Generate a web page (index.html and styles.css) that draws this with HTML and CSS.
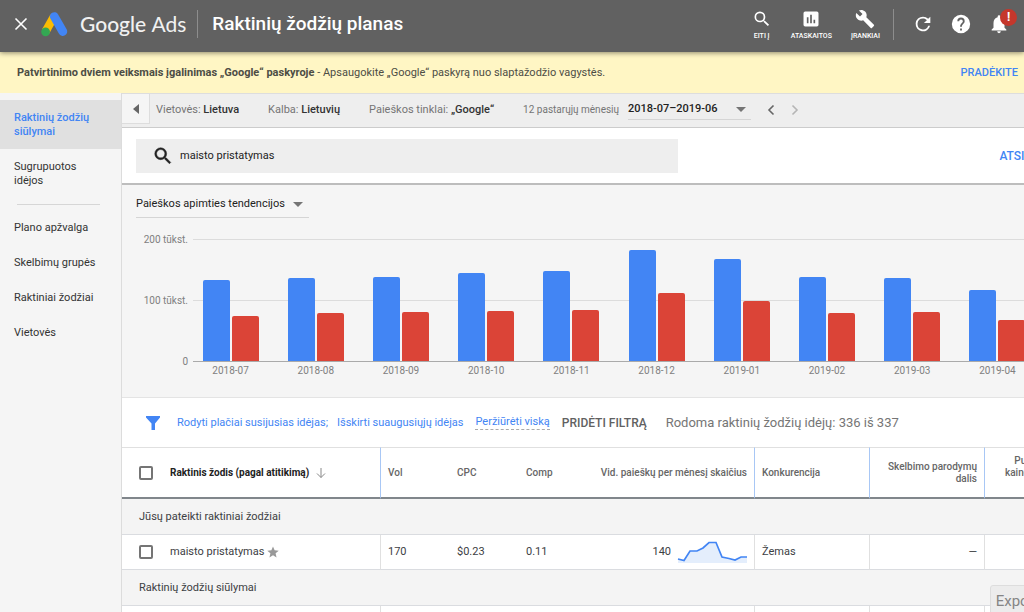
FILE: index.html
```html
<!DOCTYPE html>
<html lang="lt">
<head>
<meta charset="utf-8">
<meta name="viewport" content="width=device-width, initial-scale=1">
<title>Raktinių žodžių planas</title>
<link rel="stylesheet" href="styles.css">
</head>
<body>
<header class="topbar">
  <button class="icon-btn close" aria-label="Uždaryti"><svg width="14" height="14" viewBox="0 0 14 14"><path d="M1.500 1.500l11 11M12.500 1.500l-11 11" stroke="#fff" stroke-width="1.600"/></svg></button>
  <svg class="logo" width="27" height="25" viewBox="0 0 27 25"><path d="M13 4.500L4.600 19.500" stroke="#fbbc04" stroke-width="8.400"/><path d="M13.300 4.600L21.800 19.500" stroke="#4285f4" stroke-width="8.800" stroke-linecap="round"/><circle cx="4.600" cy="19.800" r="4.400" fill="#34a853"/></svg>
  <span class="brand">Google <span class="brand-light">Ads</span></span>
  <h1 class="title">Raktinių žodžių planas</h1>
  <nav class="tools">
    <button class="tool"><svg width="20" height="20" viewBox="0 0 24 24"><path fill="#fff" d="M15.500 14h-.79l-.28-.27A6.470 6.470 0 0 0 16 9.500 6.500 6.500 0 1 0 9.500 16c1.610 0 3.090-.59 4.230-1.570l.27.28v.79l5 4.990L20.490 19l-4.990-5zm-6 0a4.500 4.500 0 1 1 0-9 4.500 4.500 0 0 1 0 9z"/></svg>EITI Į</button>
    <button class="tool"><svg width="20" height="20" viewBox="0 0 24 24"><path fill="#fff" d="M19 3H5a2 2 0 0 0-2 2v14a2 2 0 0 0 2 2h14a2 2 0 0 0 2-2V5a2 2 0 0 0-2-2zM9 17H7v-7h2v7zm4 0h-2V7h2v10zm4 0h-2v-4h2v4z"/></svg>ATASKAITOS</button>
    <button class="tool"><svg width="20" height="20" viewBox="0 0 24 24"><path fill="#fff" d="M22.700 19l-9.100-9.100c.9-2.300.4-5-1.500-6.900-2-2-5-2.400-7.400-1.300L9 6 6 9 1.600 4.700C.4 7.100.9 10.100 2.900 12.100c1.900 1.900 4.600 2.400 6.900 1.500l9.100 9.100c.4.400 1 .4 1.400 0l2.300-2.300c.5-.4.5-1.100.1-1.400z"/></svg>ĮRANKIAI</button>
  </nav>
  <div class="actions">
    <button class="icon-btn" aria-label="Atnaujinti"><svg width="22" height="22" viewBox="0 0 24 24"><path fill="#fff" d="M17.650 6.350A7.960 7.960 0 0 0 12 4a8 8 0 1 0 7.730 10h-2.080A6 6 0 1 1 12 6c1.660 0 3.140.69 4.220 1.780L13 11h7V4l-2.350 2.350z"/></svg></button>
    <button class="icon-btn" aria-label="Pagalba"><svg width="22" height="22" viewBox="0 0 24 24"><path fill="#fff" d="M12 2a10 10 0 1 0 0 20 10 10 0 0 0 0-20zm1 17h-2v-2h2v2zm2.070-7.750l-.9.920C13.450 12.900 13 13.500 13 15h-2v-.5c0-1.100.45-2.100 1.170-2.830l1.240-1.260c.37-.36.590-.86.590-1.410a2 2 0 1 0-4 0H8a4 4 0 1 1 8 0c0 .88-.36 1.680-.93 2.250z"/></svg></button>
    <button class="icon-btn bell" aria-label="Pranešimai"><svg width="22" height="22" viewBox="0 0 24 24"><path fill="#fff" d="M12 22a2 2 0 0 0 2-2h-4a2 2 0 0 0 2 2zm6-6v-5c0-3.070-1.640-5.640-4.500-6.320V4a1.500 1.500 0 0 0-3 0v.68C7.630 5.360 6 7.920 6 11v5l-2 2v1h16v-1l-2-2z"/></svg><span class="badge">!</span></button>
  </div>
</header>

<div class="notice">
  <p class="notice-text"><b>Patvirtinimo dviem veiksmais įgalinimas „Google“ paskyroje</b> - Apsaugokite „Google“ paskyrą nuo slaptažodžio vagystės.</p>
  <a class="notice-link" href="#">PRADĖKITE</a>
</div>

<div class="layout">
  <nav class="sidebar">
    <a class="side-item active" href="#">Raktinių žodžių siūlymai</a>
    <a class="side-item" href="#">Sugrupuotos idėjos</a>
    <hr class="side-rule">
    <a class="side-item" href="#">Plano apžvalga</a>
    <a class="side-item" href="#">Skelbimų grupės</a>
    <a class="side-item" href="#">Raktiniai žodžiai</a>
    <a class="side-item" href="#">Vietovės</a>
  </nav>

  <main class="main">
    <div class="context">
      <button class="collapse" aria-label="Suskleisti"><svg width="8" height="12" viewBox="0 0 8 12"><path d="M7 1v10L1 6z" fill="#666"/></svg></button>
      <span class="ctx">Vietovės: <b>Lietuva</b></span>
      <span class="ctx">Kalba: <b>Lietuvių</b></span>
      <span class="ctx">Paieškos tinklai: <b>„Google“</b></span>
      <label class="period" for="period">12 pastarųjų mėnesių</label>
      <select class="drop date" id="period"><option>2018-07–2019-06</option></select>
      <button class="icon-btn" aria-label="Ankstesnis"><svg width="8" height="12" viewBox="0 0 8 12"><path d="M6.500 1.500L2 6l4.500 4.500" fill="none" stroke="#666" stroke-width="1.600"/></svg></button>
      <button class="icon-btn next" aria-label="Kitas"><svg width="8" height="12" viewBox="0 0 8 12"><path d="M1.500 1.500L6 6l-4.500 4.500" fill="none" stroke="#b5b5b5" stroke-width="1.600"/></svg></button>
    </div>

    <div class="searchbar">
      <label class="search"><svg width="22" height="22" viewBox="0 0 24 24"><path fill="#212121" stroke="#212121" stroke-width=".5" d="M15.500 14h-.79l-.28-.27A6.470 6.470 0 0 0 16 9.500 6.500 6.500 0 1 0 9.500 16c1.610 0 3.090-.59 4.230-1.570l.27.28v.79l5 4.990L20.490 19l-4.990-5zm-6 0a4.500 4.500 0 1 1 0-9 4.500 4.500 0 0 1 0 9z"/></svg><input class="search-input" type="text" aria-label="Raktinis žodis" value="maisto pristatymas"></label>
      <a class="download" href="#">ATSISIŲSTI</a>
    </div>

    <section class="trends">
      <select class="drop trend" aria-label="Diagrama"><option>Paieškos apimties tendencijos</option></select>
      <div class="chart">
        <div class="axis"><span>200 tūkst.</span><span>100 tūkst.</span><span>0</span></div>
        <div class="plot">
          <div class="bars">
            <div class="pair"><i class="bar" style="height:66%"></i><i class="bar red" style="height:37%"></i></div>
            <div class="pair"><i class="bar" style="height:68%"></i><i class="bar red" style="height:39%"></i></div>
            <div class="pair"><i class="bar" style="height:69%"></i><i class="bar red" style="height:40%"></i></div>
            <div class="pair"><i class="bar" style="height:72%"></i><i class="bar red" style="height:41%"></i></div>
            <div class="pair"><i class="bar" style="height:74%"></i><i class="bar red" style="height:42%"></i></div>
            <div class="pair"><i class="bar" style="height:91%"></i><i class="bar red" style="height:56%"></i></div>
            <div class="pair"><i class="bar" style="height:84%"></i><i class="bar red" style="height:49%"></i></div>
            <div class="pair"><i class="bar" style="height:69%"></i><i class="bar red" style="height:39%"></i></div>
            <div class="pair"><i class="bar" style="height:68%"></i><i class="bar red" style="height:40%"></i></div>
            <div class="pair"><i class="bar" style="height:58%"></i><i class="bar red" style="height:34%"></i></div>
          </div>
          <div class="months"><span>2018-07</span><span>2018-08</span><span>2018-09</span><span>2018-10</span><span>2018-11</span><span>2018-12</span><span>2019-01</span><span>2019-02</span><span>2019-03</span><span>2019-04</span></div>
        </div>
      </div>
    </section>

    <div class="filters">
      <svg class="funnel" width="14" height="14" viewBox="0 0 14 14"><path d="M0 0h14v1.500L9 7.500V14H5.500V7.500L0 1.500z" fill="#4285f4"/></svg>
      <a class="filter" href="#">Rodyti plačiai susijusias idėjas;</a>
      <a class="filter" href="#">Išskirti suaugusiųjų idėjas</a>
      <a class="filter all" href="#">Peržiūrėti viską</a>
      <button class="add-filter">PRIDĖTI FILTRĄ</button>
      <span class="count">Rodoma raktinių žodžių idėjų: 336 iš 337</span>
    </div>

    <table class="ideas">
      <colgroup><col class="c-key"><col class="c-num"><col class="c-num"><col class="c-num"><col class="c-avg"><col class="c-std"><col class="c-std"><col class="c-bid"></colgroup>
      <thead>
        <tr>
          <th class="key line"><div class="key-cell"><input class="tick" type="checkbox" aria-label="Pasirinkti visus"><span class="key-head">Raktinis žodis (pagal atitikimą)</span><svg width="10" height="12" viewBox="0 0 10 12"><path d="M5 1v9.500M1 6.500l4 4 4-4" fill="none" stroke="#888"/></svg></div></th>
          <th>Vol</th><th>CPC</th><th>Comp</th>
          <th class="num line">Vid. paieškų per mėnesį skaičius</th>
          <th class="line">Konkurencija</th>
          <th class="num line">Skelbimo parodymų dalis</th>
          <th class="num">Puslapio viršaus<br>kainos pasiūlymas<br>(žemas)</th>
        </tr>
      </thead>
      <tbody>
        <tr class="group"><td colspan="8">Jūsų pateikti raktiniai žodžiai</td></tr>
        <tr>
          <td class="key line"><div class="key-cell"><input class="tick" type="checkbox" id="k1"><label for="k1">maisto pristatymas</label><svg class="star" width="12" height="12" viewBox="0 0 24 24"><path d="M12 1l3.200 7.600 8.300.7-6.300 5.400 1.900 8.100L12 18.500l-7.100 4.300 1.900-8.100L.5 9.300l8.300-.7z" fill="#999"/></svg></div></td>
          <td>170</td><td>$0.23</td><td>0.11</td>
          <td class="line"><div class="avg"><span>140</span><svg width="70" height="22" viewBox="0 0 70 22"><path d="M1 18l6 1.500L13 10h7l6-3 6-5.500h7L45 16l7 1.500 6 1.500 6-3h6v6H1z" fill="#e4eefc"/><path d="M1 18l6 1.500L13 10h7l6-3 6-5.500h7L45 16l7 1.500 6 1.500 6-3h6" fill="none" stroke="#4285f4" stroke-width="1.700"/></svg></div></td>
          <td class="line">Žemas</td>
          <td class="num line">—</td>
          <td></td>
        </tr>
        <tr class="group"><td colspan="8">Raktinių žodžių siūlymai</td></tr>
        <tr><td class="key line"></td><td></td><td></td><td></td><td class="line"></td><td class="line"></td><td class="line"></td><td></td></tr>
      </tbody>
    </table>
  </main>
</div>
<button class="export">Export</button>
</body>
</html>
```
FILE: styles.css
```css
* { box-sizing: border-box; }
body {
  margin: 0;
  height: 100vh;
  overflow: hidden;
  display: flex;
  flex-direction: column;
  background: #f5f5f5;
  color: #3c4043;
  font: 11px/14px Roboto, "Liberation Sans", sans-serif;
}
button, input, select { font: inherit; color: inherit; margin: 0; }
button { border: 0; padding: 0; background: none; cursor: pointer; }
a { color: #4285f4; text-decoration: none; }
svg { display: block; flex: none; }
b { font-weight: 500; }

.topbar {
  position: relative;
  z-index: 1;
  display: flex;
  align-items: center;
  flex: none;
  height: 52px;
  padding: 0 13px 4px 14px;
  background: #616161;
  box-shadow: 0 1px 5px rgba(0, 0, 0, .45);
  color: #fff;
  white-space: nowrap;
}
.icon-btn { flex: none; }
.logo { margin: 0 12px 0 13px; }
.brand { font: 500 21px/28px Lato, sans-serif; color: #f1f1f1; }
.brand-light { font-weight: 400; }
.title {
  margin: 0 auto 0 11px;
  padding-left: 14px;
  border-left: 1px solid #8d8d8d;
  font-size: 19px;
  line-height: 28px;
  font-weight: 500;
}
.tools { display: flex; gap: 19px; padding-right: 13px; border-right: 1px solid #8d8d8d; }
.tool {
  display: flex;
  flex-direction: column;
  align-items: center;
  gap: 3px;
  font-size: 7px;
  line-height: 8px;
  font-weight: 500;
}
.actions { display: flex; gap: 16px; padding: 0 1px 0 18px; }
.bell { position: relative; }
.badge {
  position: absolute;
  left: 12px;
  top: -4px;
  width: 17px;
  border-radius: 50%;
  background: #c5372c;
  font-size: 12px;
  line-height: 17px;
  font-weight: 700;
}

.notice {
  display: flex;
  align-items: center;
  justify-content: space-between;
  flex: none;
  height: 41px;
  padding: 0 6px 0 17px;
  background: #fff6c4;
  color: #4d4d45;
  white-space: nowrap;
}
.notice-text { margin: 0; }
.notice-text b { font-weight: 700; }
.notice-link { font-weight: 500; }

.layout { display: flex; flex: 1; min-height: 0; }
.sidebar { flex: none; width: 121px; padding-top: 7px; }
.side-item { display: block; padding: 11px 14px 10px; color: #333; }
.side-item.active { background: #e0e0e0; color: #4285f4; font-weight: 500; }
.side-rule { margin: 6px 21px 5px 17px; border: 0; border-top: 1px solid #d6d6d6; }

.main { flex: 1; min-width: 0; overflow: hidden; border-left: 1px solid #dcdcdc; }
.context {
  display: flex;
  align-items: center;
  height: 35px;
  padding-bottom: 2px;
  border-top: 1px solid #ddd;
  border-bottom: 1px solid #ccc;
  background: #eee;
  color: #757575;
  white-space: nowrap;
}
.context b { color: #333; }
.collapse {
  display: grid;
  place-items: center;
  align-self: flex-start;
  width: 28px;
  height: 30px;
  margin-right: 6px;
  border-right: 1px solid #ddd;
  border-bottom: 1px solid #ddd;
  background: #f5f5f5;
}
.ctx { margin-right: 29px; }
.period { margin-right: 9px; font-size: 10px; }
.drop {
  appearance: none;
  border: 0;
  border-bottom: 1px solid #d5d5d5;
  border-radius: 0;
  padding: 0;
  background: url("data:image/svg+xml,%3Csvg xmlns='http://www.w3.org/2000/svg' width='10' height='5'%3E%3Cpath d='M0 0h10L5 5z' fill='%23757575'/%3E%3C/svg%3E") no-repeat right 5px center;
  color: #222;
}
.date { width: 123px; height: 20px; margin-right: 16px; font-weight: 500; }
.next { margin-left: 16px; }

.searchbar {
  display: flex;
  align-items: center;
  height: 57px;
  padding: 0 0 0 14px;
  border-bottom: 2px solid #bdbdbd;
  background: #fff;
}
.search {
  display: flex;
  align-items: center;
  gap: 6px;
  flex: 0 0 61%;
  height: 34px;
  padding-left: 16px;
  background: #eee;
}
.search-input { flex: 1; border: 0; padding: 0; outline: 0; background: none; color: #222; }
.download { margin: 0 -37px 0 auto; font-size: 12px; font-weight: 500; }

.trends { height: 213px; padding: 9px 0 0 14px; border-bottom: 1px solid #e4e4e4; }
.trend { display: block; width: 173px; height: 24px; padding-bottom: 4px; background-position: right 6px top 8px; }
.chart { display: flex; margin-top: 21px; color: #808080; font-size: 10px; }
.axis {
  display: flex;
  flex-direction: column;
  justify-content: space-between;
  flex: none;
  width: 52px;
  height: 136px;
  margin-top: -6px;
  text-align: right;
}
.plot { flex: 1; min-width: 0; margin-right: -16px; }
.bars {
  display: grid;
  grid-template-columns: repeat(10, 1fr);
  height: 123px;
  background:
    linear-gradient(#dcdcdc, #dcdcdc) 5px 0 / 100% 1px no-repeat,
    linear-gradient(#dcdcdc, #dcdcdc) 5px 61px / 100% 1px no-repeat,
    linear-gradient(#aaa, #aaa) 5px 122px / 100% 1px no-repeat;
}
.pair { display: flex; align-items: flex-end; justify-content: center; gap: 2px; height: 122px; }
.bar { width: 27px; border-radius: 2px 2px 0 0; background: #4285f4; }
.bar.red { background: #db4437; }
.months { display: grid; grid-template-columns: repeat(10, 1fr); margin-top: 2px; text-align: center; }

.filters {
  display: flex;
  align-items: center;
  height: 49px;
  padding-left: 24px;
  background: #fff;
  white-space: nowrap;
}
.funnel { margin-right: 17px; }
.filter { margin-right: 9px; }
.filter.all { margin: 0 12px 0 3px; border-bottom: 1px dashed #aaa; }
.add-filter { margin-right: 19px; color: #616161; font-size: 12px; font-weight: 500; }
.count { color: #757575; font-size: 13px; }

.ideas { width: 973px; table-layout: fixed; border-collapse: separate; border-spacing: 0; background: #fff; }
.c-key { width: 259px; }
.c-num { width: 69px; }
.c-avg { width: 167px; }
.c-std { width: 115px; }
.c-bid { width: 110px; }
.ideas th, .ideas td { padding: 0 7px; text-align: left; }
.ideas th {
  height: 52px;
  border-top: 1px solid #e0e0e0;
  border-bottom: 2px solid #80868b;
  color: #666;
  font-size: 10px;
  line-height: 12px;
  font-weight: 500;
}
.ideas td { height: 35px; border-bottom: 1px solid #dadce0; }
.ideas th.line { border-right: 1px solid #a8c7f5; }
.ideas td.line { border-right: 1px solid #e0e0e0; }
.ideas .num { text-align: right; }
.ideas .key { padding-left: 17px; }
.ideas .group td { height: 36px; padding-left: 17px; background: #f4f4f4; }
.key-cell { display: flex; align-items: center; }
.key-head { margin-right: 7px; color: #222; font-weight: 700; }
.tick {
  appearance: none;
  flex: none;
  width: 14px;
  height: 14px;
  margin-right: 17px;
  border: 2px solid #757575;
  border-radius: 2px;
  background: #fff;
}
.star { margin-left: 3px; }
.avg { display: flex; align-items: center; justify-content: flex-end; gap: 6px; }

.export {
  position: fixed;
  right: -21px;
  bottom: -4px;
  z-index: 2;
  padding: 0 5px;
  height: 31px;
  border: 1px solid #ddd;
  border-radius: 3px;
  background: #ececec;
  color: #858585;
  font-size: 15px;
}
```
